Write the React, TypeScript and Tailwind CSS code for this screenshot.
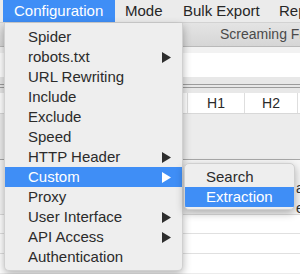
import React from "react";

const Arrow = ({ white = false }: { white?: boolean }) => (
  <svg width="9" height="11" viewBox="0 0 9 11" className="absolute left-[157px] top-[5px]">
    <polygon points="0,0 9,5.5 0,11" fill={white ? "#ffffff" : "#2e2e2e"} />
  </svg>
);

const items: { label: string; arrow?: boolean; active?: boolean }[] = [
  { label: "Spider" },
  { label: "robots.txt", arrow: true },
  { label: "URL Rewriting" },
  { label: "Include" },
  { label: "Exclude" },
  { label: "Speed" },
  { label: "HTTP Header", arrow: true },
  { label: "Custom", arrow: true, active: true },
  { label: "Proxy" },
  { label: "User Interface", arrow: true },
  { label: "API Access", arrow: true },
  { label: "Authentication" },
];

export default function App() {
  return (
    <div className="relative w-[300px] h-[274px] overflow-hidden bg-[#ececec] font-['Liberation_Sans',Arial,sans-serif]">
      {/* Menu bar */}
      <div className="flex h-[23px] items-center overflow-hidden bg-[#ebebeb] border-b border-[#d2d2d2] text-[15px] text-[#262626] whitespace-nowrap">
        <div className="ml-[3px] flex h-[23px] w-[112px] shrink-0 items-center bg-[#3f8ef6] pl-[11px] text-white">Configuration</div>
        <div className="ml-[10px] w-[58px] shrink-0">Mode</div>
        <div className="w-[96px] shrink-0">Bulk Export</div>
        <div className="shrink-0">Reports</div>
      </div>

      {/* Window title bar */}
      <div className="flex h-[24px] items-center overflow-hidden bg-gradient-to-b from-[#e4e4e4] to-[#d6d6d6] border-b border-[#b9b9b9] pl-[220px] text-[14px] text-[#4a4a4a] whitespace-nowrap">
        <span className="shrink-0">Screaming Frog SEO Spider</span>
      </div>
      <div className="h-[6px] bg-[#f2f2f2]" />
      <div className="h-[24px] bg-white" />
      <div className="h-[7px] bg-[#e8e8e8]" />
      <div className="h-[1px] bg-[#9c9c9c]" />
      <div className="h-[2px] bg-[#e8e8e8]" />
      <div className="h-[1px] bg-[#9c9c9c]" />
      <div className="h-[5px] bg-[#e8e8e8]" />

      {/* Header row */}
      <div className="flex h-[21px] bg-white border-b border-[#d8d8d8] text-[14px] text-[#2a2a2a]">
        <div className="w-[188px] shrink-0 border-r border-[#dedede]" />
        <div className="flex w-[57px] shrink-0 items-center justify-center border-r border-[#dedede]">H1</div>
        <div className="flex w-[53px] shrink-0 items-center justify-center border-r border-[#dedede]">H2</div>
        <div className="flex-1" />
      </div>
      <div className="h-[45px] bg-[#ececec]" />
      <div className="h-[1px] bg-[#a8a8a8]" />
      <div className="relative h-[54px] bg-[#f6f6f6] text-[14px] text-[#333]">
        <span className="absolute left-[296px] top-[18px]">a</span>
        <span className="absolute left-[296px] top-[38px]">e</span>
      </div>
      <div className="h-[19px] bg-white border-t border-[#dcdcdc]" />
      <div className="h-[20px] bg-white border-t border-[#e0e0e0]" />
      <div className="h-[20px] bg-white border-t border-[#e0e0e0]" />

      {/* Dropdown menu */}
      <div className="absolute left-[4px] top-[23px] w-[179px] h-[248px] rounded-b-[5px] bg-[#eeeeee] shadow-[0_3px_8px_rgba(0,0,0,0.3)] border border-t-0 border-[#d0d0d0] pt-[4px] text-[15px] text-[#2b2b2b]">
        {items.map((it) => (
          <div
            key={it.label}
            className={
              "relative flex h-[20px] items-center pl-[23px] whitespace-nowrap " +
              (it.active ? "bg-[#3f8ef6] text-white" : "")
            }
          >
            {it.label}
            {it.arrow && <Arrow white={it.active} />}
          </div>
        ))}
      </div>

      {/* Submenu */}
      <div className="absolute left-[184px] top-[163px] w-[111px] h-[47px] rounded-[5px] bg-[#eeeeee] shadow-[0_3px_8px_rgba(0,0,0,0.3)] border border-[#d0d0d0] pt-[3px] text-[15px] text-[#2b2b2b] overflow-hidden">
        <div className="flex h-[20px] items-center pl-[21px]">Search</div>
        <div className="flex h-[20px] items-center pl-[21px] bg-[#3f8ef6] text-white">Extraction</div>
      </div>
    </div>
  );
}
